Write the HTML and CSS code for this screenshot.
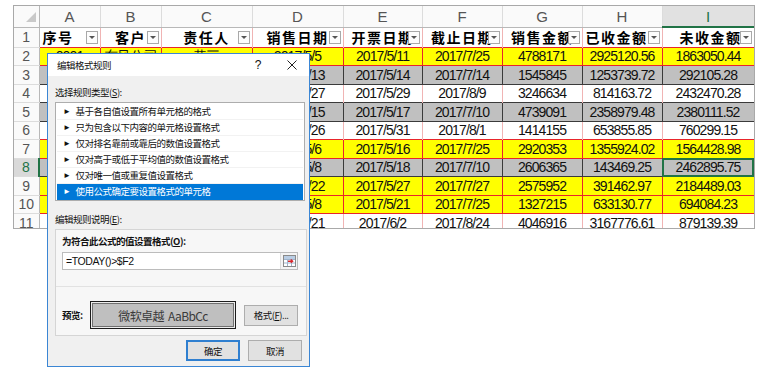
FILE: index.html
```html
<!DOCTYPE html>
<html lang="zh">
<head>
  <meta charset="UTF-8">
  <title>编辑格式规则</title>
  <link rel="stylesheet" href="styles.css">
</head>
<body>

  <div class="sheet">
    <table class="grid">
      <colgroup>
        <col class="c-rn"><col class="c-a"><col class="c-b"><col class="c-c"><col class="c-d">
        <col class="c-e"><col class="c-f"><col class="c-g"><col class="c-h"><col class="c-i">
      </colgroup>
      <thead>
        <tr class="letters">
          <th class="corner"><i class="tri"></i></th>
          <th>A</th><th>B</th><th>C</th><th>D</th><th>E</th><th>F</th><th>G</th><th>H</th>
          <th class="sel">I</th>
        </tr>
        <tr class="heads">
          <th class="rn">1</th>
          <th class="left">序号<i class="flt"></i></th>
          <th>客户<i class="flt"></i></th>
          <th>责任人<i class="flt"></i></th>
          <th>销售日期<i class="flt"></i></th>
          <th>开票日期<i class="flt"></i></th>
          <th>截止日期<i class="flt"></i></th>
          <th>销售金额<i class="flt"></i></th>
          <th class="left">已收金额<i class="flt"></i></th>
          <th class="right">未收金额<i class="flt"></i></th>
        </tr>
      </thead>
      <tbody>
        <tr class="yellow"><th class="rn">2</th><td>0001</td><td>东风公司</td><td>黄三</td><td>2017/5/5</td><td>2017/5/11</td><td>2017/7/25</td><td>4788171</td><td>2925120.56</td><td>1863050.44</td></tr>
        <tr class="gray"><th class="rn">3</th><td>0002</td><td>长城公司</td><td>李四</td><td>2017/5/13</td><td>2017/5/14</td><td>2017/7/14</td><td>1545845</td><td>1253739.72</td><td>292105.28</td></tr>
        <tr class="white"><th class="rn">4</th><td>0003</td><td>华信公司</td><td>王五</td><td>2017/5/27</td><td>2017/5/29</td><td>2017/8/9</td><td>3246634</td><td>814163.72</td><td>2432470.28</td></tr>
        <tr class="gray"><th class="rn">5</th><td>0004</td><td>东风公司</td><td>赵六</td><td>2017/5/15</td><td>2017/5/17</td><td>2017/7/10</td><td>4739091</td><td>2358979.48</td><td>2380111.52</td></tr>
        <tr class="white"><th class="rn">6</th><td>0005</td><td>长城公司</td><td>黄三</td><td>2017/5/26</td><td>2017/5/31</td><td>2017/8/1</td><td>1414155</td><td>653855.85</td><td>760299.15</td></tr>
        <tr class="yellow"><th class="rn">7</th><td>0006</td><td>华信公司</td><td>李四</td><td>2017/5/6</td><td>2017/5/16</td><td>2017/7/25</td><td>2920353</td><td>1355924.02</td><td>1564428.98</td></tr>
        <tr class="gray"><th class="rn active">8</th><td>0007</td><td>东风公司</td><td>王五</td><td>2017/5/8</td><td>2017/5/18</td><td>2017/7/10</td><td>2606365</td><td>143469.25</td><td class="cur">2462895.75</td></tr>
        <tr class="yellow"><th class="rn">9</th><td>0008</td><td>长城公司</td><td>赵六</td><td>2017/5/22</td><td>2017/5/27</td><td>2017/7/27</td><td>2575952</td><td>391462.97</td><td>2184489.03</td></tr>
        <tr class="yellow"><th class="rn">10</th><td>0009</td><td>华信公司</td><td>黄三</td><td>2017/5/8</td><td>2017/5/21</td><td>2017/7/25</td><td>1327215</td><td>633130.77</td><td>694084.23</td></tr>
        <tr class="white"><th class="rn">11</th><td>0010</td><td>东风公司</td><td>李四</td><td>2017/5/21</td><td>2017/6/2</td><td>2017/8/24</td><td>4046916</td><td>3167776.61</td><td>879139.39</td></tr>
      </tbody>
    </table>
  </div>

  <div class="dialog">
    <div class="titlebar">
      <span class="title">编辑格式规则</span>
      <span class="tb-btn">?</span>
      <span class="tb-btn">
        <svg width="10" height="10" viewBox="0 0 10 10"><path d="M0.5 0.5L9.5 9.5M9.5 0.5L0.5 9.5" stroke="#222" stroke-width="1"/></svg>
      </span>
    </div>

    <div class="dlg-body">
      <div class="label">选择规则类型(<u>S</u>):</div>
      <ul class="rules">
        <li>基于各自值设置所有单元格的格式</li>
        <li>只为包含以下内容的单元格设置格式</li>
        <li>仅对排名靠前或靠后的数值设置格式</li>
        <li>仅对高于或低于平均值的数值设置格式</li>
        <li>仅对唯一值或重复值设置格式</li>
        <li class="on">使用公式确定要设置格式的单元格</li>
      </ul>

      <div class="label gap">编辑规则说明(<u>E</u>):</div>
      <div class="panel">
        <div class="label bold">为符合此公式的值设置格式(<u>O</u>):</div>
        <div class="formula">
          <span class="ftext">=TODAY()&gt;$F2</span>
          <span class="pick">
            <svg width="13" height="12" viewBox="0 0 13 12">
              <rect x="0.5" y="0.5" width="12" height="11" fill="#fff" stroke="#8a8a8a"/>
              <path d="M1 4.5h11M1 8h11M4.5 1v10M8.5 1v10" stroke="#9fb4cc"/>
              <rect x="1" y="1" width="11" height="3" fill="#b9cde4"/>
              <path d="M5 6.2h4.5M7.8 4.6l1.8 1.6-1.8 1.6" stroke="#d9262b" stroke-width="1.4" fill="none"/>
            </svg>
          </span>
        </div>
        <div class="sep"></div>
        <div class="preview-row">
          <span class="label bold">预览:</span>
          <div class="preview">微软卓越&nbsp; AaBbCc</div>
          <button class="btn fmt">格式(<u>F</u>)...</button>
        </div>
      </div>

      <div class="actions">
        <button class="btn primary">确定</button>
        <button class="btn">取消</button>
      </div>
    </div>
  </div>

</body>
</html>
```

FILE: styles.css
```css
body {
  margin: 0;
  background: #fff;
  font-family: "Liberation Sans", Arial, sans-serif;
}

/* spreadsheet */

.sheet {
  margin: 5px 0 0 13px;
  width: 742px;
  height: 224px;
  box-sizing: border-box;
  border: 1px solid #a9a9a9;
  overflow: hidden;
}

.grid {
  width: 740px;
  table-layout: fixed;
  border-collapse: collapse;
  font-family: "Liberation Sans", Arial, sans-serif;
  font-size: 14px;
  letter-spacing: -0.9px;
  color: #111;
}

.c-rn { width: 25px; }
.c-a, .c-b { width: 61px; }
.c-c, .c-d { width: 91px; }
.c-e { width: 79px; }
.c-f, .c-g, .c-h { width: 80px; }
.c-i { width: 92px; }

.grid th, .grid td {
  padding: 0;
  white-space: nowrap;
  overflow: hidden;
  text-align: center;
  vertical-align: middle;
  line-height: 1;
}

.letters { height: 21px; }
.letters th {
  background: #fafafa;
  color: #555;
  font-weight: normal;
  font-size: 15px;
  letter-spacing: 0;
  border-right: 1px solid #dcdcdc;
  border-bottom: 1px solid #b8b8b8;
}
.letters th.sel {
  background: #e1e1e1;
  color: #217346;
  border-bottom: 2px solid #217346;
}
.letters th.corner {
  text-align: right;
  vertical-align: bottom;
  border-right-color: #b8b8b8;
}
.tri {
  display: inline-block;
  margin: 0 3px 3px 0;
  border-left: 10px solid transparent;
  border-bottom: 10px solid #c9c9c9;
}

.heads { height: 20px; }
.heads th {
  position: relative;
  font-family: "Noto Sans CJK SC", sans-serif;
  font-size: 14px;
  font-weight: bold;
  letter-spacing: 1.5px;
  color: #000;
  background: #fff;
  border-right: 1px solid #f0b4b4;
}
.heads th.left { text-align: left; padding-left: 3px; }
.heads th.right { text-align: right; padding-right: 12px; }

.flt {
  position: absolute;
  right: 2px;
  top: 3px;
  width: 12px;
  height: 13px;
  box-sizing: border-box;
  border: 1px solid #a9a9a9;
  background: #fdfdfd;
}
.flt::after {
  content: "";
  position: absolute;
  left: 2px;
  top: 4px;
  border-left: 3px solid transparent;
  border-right: 3px solid transparent;
  border-top: 3px solid #555;
}

.grid th.rn {
  background: #fafafa;
  color: #555;
  font-weight: normal;
  font-family: "Liberation Sans", Arial, sans-serif;
  font-size: 14px;
  letter-spacing: 0;
  border-right: 1px solid #b8b8b8;
  border-bottom: 1px solid #dcdcdc;
}
.grid th.rn.active {
  background: #d9d9d9;
  color: #217346;
  border-right: 2px solid #217346;
}

tbody tr { height: 18.5px; }

.yellow td {
  background: #ffff00;
  border: 1px solid #e8252b;
}
.gray td {
  background: #c0c0c0;
  border: 1px solid #3a3a3a;
}
.white td {
  background: #fff;
  border-right: 1px solid #f0b4b4;
}
.grid td.cur {
  outline: 2px solid #217346;
  outline-offset: -2px;
}

/* dialog */

.dialog {
  position: absolute;
  left: 47px;
  top: 53px;
  width: 263px;
  height: 314px;
  box-sizing: border-box;
  border: 1px solid #3b86d4;
  background: #f0f0f0;
  font-family: "Noto Sans CJK SC", sans-serif;
  font-size: 9.5px;
  letter-spacing: -0.5px;
  color: #111;
}

.titlebar {
  display: flex;
  align-items: center;
  height: 22px;
  padding-left: 9px;
  background: #fff;
}
.title { flex: 1; }
.tb-btn {
  width: 34px;
  display: flex;
  justify-content: center;
  font-family: "Liberation Sans", sans-serif;
  font-size: 12px;
  letter-spacing: 0;
}

.dlg-body {
  display: flex;
  flex-direction: column;
  padding: 10px 4px 0 7px;
}

.label {
  height: 12px;
  line-height: 12px;
}
.label.gap { margin-top: 12px; }
.label.bold { font-weight: bold; }

.rules {
  list-style: none;
  margin: 4px 0 0;
  padding: 1px;
  height: 99px;
  box-sizing: border-box;
  background: #fff;
  border: 1px solid #adadad;
}
.rules li {
  height: 16px;
  line-height: 15px;
  padding-left: 6px;
  box-sizing: border-box;
  border-bottom: 1px solid #f2f2f2;
}
.rules li::before {
  content: "►";
  font-size: 8px;
  margin-right: 5px;
  position: relative;
  top: -1px;
}
.rules li.on {
  background: #0078d7;
  color: #fff;
  border-bottom-color: #0078d7;
}

.panel {
  margin: 4px -2px 0 0;
  height: 107px;
  box-sizing: border-box;
  border: 1px solid #d5d5d5;
  background: #f7f7f7;
  padding: 5px 8px 0 6px;
  display: flex;
  flex-direction: column;
}

.formula {
  display: flex;
  align-items: stretch;
  margin-top: 5px;
  height: 18px;
  box-sizing: border-box;
  border: 1px solid #bcbcbc;
  background: #fff;
}
.ftext {
  flex: 1;
  padding-left: 3px;
  line-height: 16px;
  font-family: "Liberation Sans", sans-serif;
  font-size: 10.5px;
  letter-spacing: -0.4px;
}
.pick {
  width: 16px;
  display: flex;
  align-items: center;
  justify-content: center;
  border-left: 1px solid #dcdcdc;
  background: #f4f4f4;
}

.sep {
  margin: 16px -8px 0 -6px;
  border-top: 1px solid #e2e2e2;
}

.preview-row {
  display: flex;
  align-items: center;
  margin-top: 14px;
}
.preview-row .label { width: 28px; }
.preview {
  width: 147px;
  height: 28px;
  box-sizing: border-box;
  border: 1px solid #1c1c1c;
  box-shadow: inset 0 0 0 1px #ededed, inset 0 0 0 2px #707070;
  background: #bfbfbf;
  display: flex;
  align-items: center;
  justify-content: center;
  font-size: 12px;
  letter-spacing: -0.6px;
  color: #3a3a3a;
}

.btn {
  height: 21px;
  width: 54px;
  padding: 0;
  border: 1px solid #adadad;
  background: #e1e1e1;
  font-family: "Noto Sans CJK SC", sans-serif;
  font-size: 9.5px;
  letter-spacing: -0.5px;
  color: #111;
}
.btn.fmt { margin-left: 8px; }
.btn.primary { border: 2px solid #2f7fd0; }

.actions {
  display: flex;
  justify-content: flex-end;
  gap: 8px;
  margin-top: 4px;
  padding-right: 3px;
}
```
